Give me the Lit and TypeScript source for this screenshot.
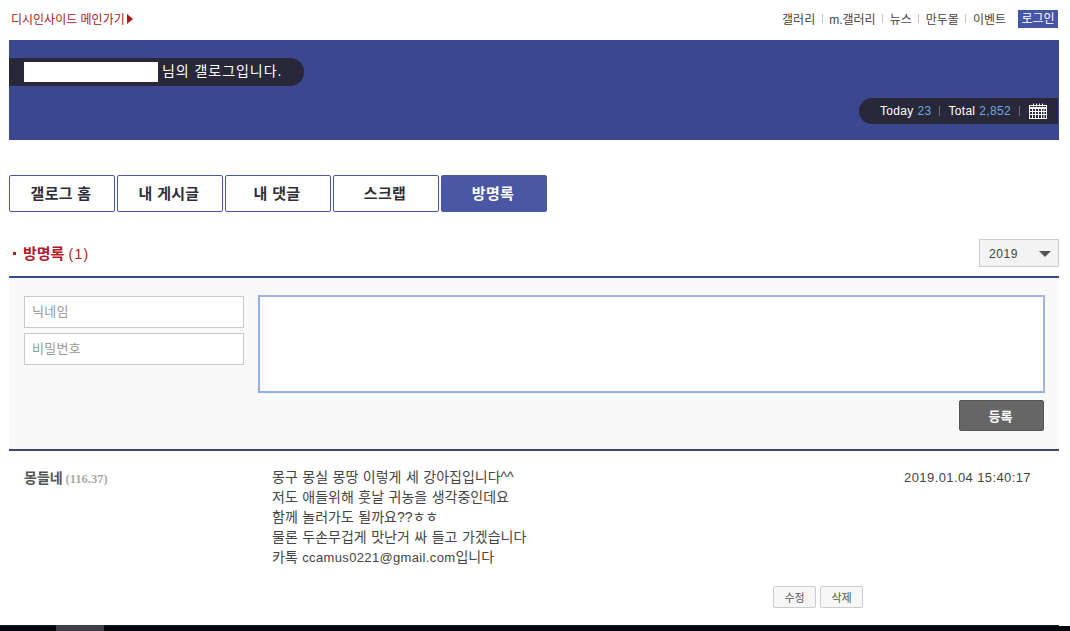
import { LitElement, html, css } from "lit";
import { customElement } from "lit/decorators.js";

@customElement("app-root")
export class AppRoot extends LitElement {
  static styles = css`
    :host { display: block; width: 1070px; height: 631px; overflow: hidden; background: #fff; position: relative;
      font-family: "Liberation Sans", "Noto Sans CJK KR", sans-serif; color: #333; font-size: 13px; }
    * { box-sizing: border-box; }
    .wrap { width: 1050px; margin-left: 9px; }
    .top { height: 40px; display: flex; justify-content: space-between; align-items: center; padding-left: 2px; padding-bottom: 3px; }
    .home { color: #a8191c; font-size: 12px; display: flex; align-items: center; gap: 2px; letter-spacing: 0; }
    .tri { width: 0; height: 0; border-left: 6px solid #a8191c; border-top: 5px solid transparent; border-bottom: 5px solid transparent; }
    .nav { display: flex; align-items: center; font-size: 12px; color: #444; }
    .nav .sep { width: 1px; height: 9px; background: #c8c8c8; margin: 0 6.5px; }
    .nav .login { background: #4655a5; color: #fff; width: 40px; text-align: center; height: 18px; line-height: 18px; margin-left: 12px; margin-right: 1px; }
    .head { height: 100px; background: #3b478e; padding-top: 18px; display: flex; flex-direction: column; }
    .pill { width: 295px; height: 28px; background: #28283a; border-radius: 0 14px 14px 0; display: flex; align-items: center; padding-left: 15px; color: #fff; font-size: 14px; gap: 4px; letter-spacing: 0.95px; line-height: 26px; }
    .pill span:last-child { padding-bottom: 2px; }
    .mask { width: 134px; height: 20px; background: #fff; flex: none; }
    .stats { align-self: flex-end; margin-top: 12px; margin-right: 1px; width: 199px; height: 26px; background: #28283a; border-radius: 13px 0 0 13px; display: flex; align-items: center; padding-left: 21px; color: #fff; font-size: 12px; letter-spacing: 0.3px; }
    .stats b { font-weight: 400; color: #6fa8dc; margin-left: 4px; }
    .stats .sep { width: 1px; height: 10px; background: #666a80; margin: 0 8px; flex: none; }
    .stats .sep.last { margin-right: 9px; }
    .stats svg { display: block; flex: none; }
    .tabs { display: flex; gap: 2px; margin-top: 35px; }
    .tab { width: 106px; height: 37px; border: 1px solid #4a57a4; border-radius: 2px; display: flex; align-items: center; justify-content: center; font-size: 15px; font-weight: 700; color: #2e2e38; background: #fff; padding-bottom: 2px; padding-right: 2px; letter-spacing: 0.3px; }
    .tab.on { background: #4a57a4; color: #fff; }
    .title-row { display: flex; justify-content: space-between; align-items: center; margin-top: 27px; height: 28px; }
    .title { display: flex; align-items: center; color: #b01822; font-size: 15px; padding-left: 4px; gap: 7px; padding-bottom: 2px; }
    .title i { width: 3px; height: 3px; background: #b01822; margin-top: 2px; }
    .title b { font-weight: 700; }
    .title em { font-style: normal; font-size: 14px; letter-spacing: 1.2px; }
    .select { width: 80px; height: 28px; border: 1px solid #ccc; background: #f3f3f3; display: flex; align-items: center; justify-content: space-between; padding: 1px 7px 0 9px; font-size: 12px; color: #444; letter-spacing: 0.6px; }
    .select i { width: 0; height: 0; border-top: 6px solid #555; border-left: 6px solid transparent; border-right: 6px solid transparent; }
    .form { margin-top: 9px; height: 175px; border-top: 2px solid #3b478e; border-bottom: 2px solid #3b4672; background: #f9f9f9; padding: 17px 14px 0 15px; }
    .fields { display: flex; gap: 15px; }
    .left { width: 220px; display: flex; flex-direction: column; gap: 5px; padding-top: 1px; flex: none; }
    .input { height: 32px; border: 1px solid #c9c9c9; background: #fff; display: flex; align-items: center; padding: 0 0 3px 7px; font-size: 13px; color: #999; letter-spacing: 0.3px; }
    .ta { width: 787px; height: 98px; margin-left: -1px; flex: none; background: #fff; border: 2px solid #8fb0ea; border-top-color: #a3b4dc; border-right-color: #a3b4dc; }
    .btn-row { display: flex; justify-content: flex-end; margin-top: 7px; padding-right: 1px; }
    .reg { width: 85px; height: 31px; background: #666; border: 1px solid #555; border-radius: 2px; color: #fff; font-size: 13px; font-weight: 700; display: flex; align-items: center; justify-content: center; padding: 0 2px 1px 0; }
    .comment { display: grid; grid-template-columns: 248px 1fr auto; padding: 17px 28px 0 15px; height: 135px; }
    .name { font-weight: 700; color: #555; font-size: 14px; line-height: 20px; }
    .name span { color: #aaa; font-size: 12.5px; font-family: "Liberation Serif", serif; margin-left: -1px; }
    .msg { line-height: 20px; color: #444; font-size: 14px; margin-top: -1px; word-spacing: 0.6px; }
    .msg span { font-size: 13px; letter-spacing: 0.35px; }
    .date { line-height: 20px; color: #444; font-size: 13px; letter-spacing: 0.4px; }
    .acts { position: absolute; left: 773px; top: 586px; display: flex; gap: 4px; }
    .act { width: 43px; height: 22px; border: 1px solid #ccc; border-radius: 2px; background: #f7f7f7; display: flex; align-items: center; justify-content: center; font-size: 11px; color: #555; }
    .foot { position: absolute; left: 0; right: 0; top: 626px; height: 5px; background: #05060f; }
    .foot u { position: absolute; left: 0; top: -1px; width: 1059px; height: 1px; background: #15172e; }
    .foot i { position: absolute; left: 56px; top: -1px; width: 48px; height: 6px; background: #3f3f45; }
  `;

  render() {
    return html`
      <div class="wrap">
        <div class="top">
          <div class="home">디시인사이드 메인가기<span class="tri"></span></div>
          <div class="nav">
            <span>갤러리</span><span class="sep"></span><span>m.갤러리</span><span class="sep"></span><span>뉴스</span><span class="sep"></span><span>만두몰</span><span class="sep"></span><span>이벤트</span>
            <span class="login">로그인</span>
          </div>
        </div>
        <div class="head">
          <div class="pill"><span class="mask"></span><span>님의 갤로그입니다.</span></div>
          <div class="stats">
            Today<b>23</b><span class="sep"></span>Total<b>2,852</b><span class="sep last"></span>
            <svg width="18" height="16" viewBox="0 0 18 16" fill="none" stroke="#fff">
              <rect x="0.5" y="2.5" width="17" height="13" fill="#28283a"/>
              <path d="M0.5 5h17" stroke-width="2"/>
              <path d="M4.5 0.5v3M7.5 0.5v3M10.5 0.5v3M13.5 0.5v3" />
              <path d="M3.5 6v9M6.5 6v9M9.5 6v9M12.5 6v9M15 6v9M0.5 8.5h17M0.5 11.5h17"/>
            </svg>
          </div>
        </div>
        <div class="tabs">
          <div class="tab">갤로그 홈</div>
          <div class="tab">내 게시글</div>
          <div class="tab">내 댓글</div>
          <div class="tab">스크랩</div>
          <div class="tab on">방명록</div>
        </div>
        <div class="title-row">
          <div class="title"><i></i><span><b>방명록</b> <em>(1)</em></span></div>
          <div class="select">2019<i></i></div>
        </div>
        <div class="form">
          <div class="fields">
            <div class="left">
              <div class="input">닉네임</div>
              <div class="input">비밀번호</div>
            </div>
            <div class="ta"></div>
          </div>
          <div class="btn-row"><div class="reg">등록</div></div>
        </div>
        <div class="comment">
          <div class="name">몽들네 <span>(116.37)</span></div>
          <div class="msg">몽구 몽실 몽땅 이렇게 세 강아집입니다^^<br>저도 애들위해 훗날 귀농을 생각중인데요<br>함께 놀러가도 될까요??ㅎㅎ<br>물론 두손무겁게 맛난거 싸 들고 가겠습니다<br>카톡 <span>ccamus0221@gmail.com</span>입니다</div>
          <div class="date">2019.01.04 15:40:17</div>
        </div>
      </div>
      <div class="acts"><div class="act">수정</div><div class="act">삭제</div></div>
      <div class="foot"><u></u><i></i></div>
    `;
  }
}
